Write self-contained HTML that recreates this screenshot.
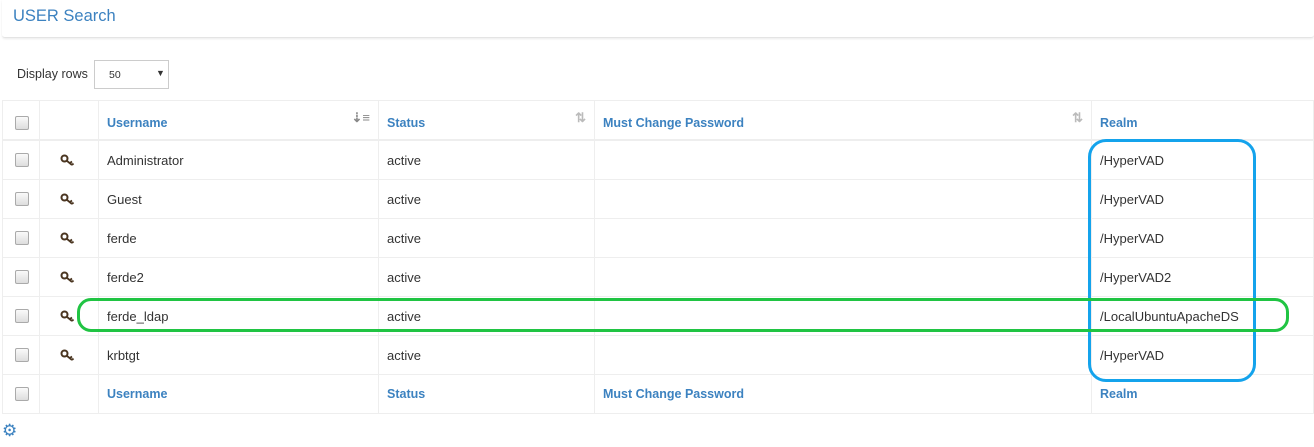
<!DOCTYPE html>
<html><head><style>
body{margin:0;width:1314px;height:447px;background:#fff;font-family:"Liberation Sans",sans-serif;font-size:13px;color:#333;position:relative;overflow:hidden}
.hdr{position:absolute;left:2px;top:0;width:1312px;height:37px;border-bottom:1px solid #e4e4e4;box-shadow:0 1px 2px rgba(0,0,0,.08);border-radius:0 0 3px 3px}
.hdr span{position:absolute;left:11px;top:7px;font-size:16.5px;color:#3c82c0}
.dr{position:absolute;left:17px;top:67px;font-size:12.5px}
.sel{position:absolute;left:94px;top:60px;width:73px;height:27px;border:1px solid #ccc;font-size:10.5px}
.sel span{position:absolute;left:14px;top:8px}
.sel i{position:absolute;left:61px;top:7px;font-style:normal;font-size:9px}
table{position:absolute;left:2px;top:100px;border-collapse:collapse;width:1312px}
td{border:1px solid #eee;height:38px;padding:0 0 0 8px;vertical-align:middle}
tr.h td{font-weight:bold;color:#3c82c0;height:38px;font-size:12.5px}
tr.h1 td{border-bottom:2px solid #eee;padding-top:5px;height:33px}
.cb{width:12px;height:12px;border:1px solid #aaa;border-radius:2px;background:linear-gradient(#fafafa,#ddd);margin-left:4px}
.srt{float:right;margin-right:8px;color:#bbb;font-size:13px;font-weight:bold;margin-top:-6px}
.key{margin-left:12px;display:block;width:16px;height:12px}
.box{position:absolute;border-style:solid}
.gear{position:absolute;left:2px;top:421px;color:#3c82c0;font-size:17px}
</style></head><body>
<div class="hdr"><span>USER Search</span></div>
<div class="dr">Display rows</div>
<div class="sel"><span>50</span><i>▼</i></div>
<table>
<tr class="h h1"><td style="width:28px"><div class="cb"></div></td><td style="width:50px"></td><td style="width:271px">Username<span class="srt" style="color:#888">⇣≡</span></td><td style="width:207px">Status<span class="srt">⇅</span></td><td style="width:488px">Must Change Password<span class="srt">⇅</span></td><td>Realm</td></tr>
<tr><td><div class="cb"></div></td><td><svg class="key" viewBox="0 0 16 12"><circle cx="4.5" cy="4.5" r="3" fill="none" stroke="#4a3520" stroke-width="2"/><path d="M6.5 6.5L12 11M10 9l2-1.5M12 11l1.5-1.5" stroke="#4a3520" stroke-width="1.8" fill="none"/></svg></td><td>Administrator</td><td>active</td><td></td><td>/HyperVAD</td></tr>
<tr><td><div class="cb"></div></td><td><svg class="key" viewBox="0 0 16 12"><circle cx="4.5" cy="4.5" r="3" fill="none" stroke="#4a3520" stroke-width="2"/><path d="M6.5 6.5L12 11M10 9l2-1.5M12 11l1.5-1.5" stroke="#4a3520" stroke-width="1.8" fill="none"/></svg></td><td>Guest</td><td>active</td><td></td><td>/HyperVAD</td></tr>
<tr><td><div class="cb"></div></td><td><svg class="key" viewBox="0 0 16 12"><circle cx="4.5" cy="4.5" r="3" fill="none" stroke="#4a3520" stroke-width="2"/><path d="M6.5 6.5L12 11M10 9l2-1.5M12 11l1.5-1.5" stroke="#4a3520" stroke-width="1.8" fill="none"/></svg></td><td>ferde</td><td>active</td><td></td><td>/HyperVAD</td></tr>
<tr><td><div class="cb"></div></td><td><svg class="key" viewBox="0 0 16 12"><circle cx="4.5" cy="4.5" r="3" fill="none" stroke="#4a3520" stroke-width="2"/><path d="M6.5 6.5L12 11M10 9l2-1.5M12 11l1.5-1.5" stroke="#4a3520" stroke-width="1.8" fill="none"/></svg></td><td>ferde2</td><td>active</td><td></td><td>/HyperVAD2</td></tr>
<tr><td><div class="cb"></div></td><td><svg class="key" viewBox="0 0 16 12"><circle cx="4.5" cy="4.5" r="3" fill="none" stroke="#4a3520" stroke-width="2"/><path d="M6.5 6.5L12 11M10 9l2-1.5M12 11l1.5-1.5" stroke="#4a3520" stroke-width="1.8" fill="none"/></svg></td><td>ferde_ldap</td><td>active</td><td></td><td>/LocalUbuntuApacheDS</td></tr>
<tr><td><div class="cb"></div></td><td><svg class="key" viewBox="0 0 16 12"><circle cx="4.5" cy="4.5" r="3" fill="none" stroke="#4a3520" stroke-width="2"/><path d="M6.5 6.5L12 11M10 9l2-1.5M12 11l1.5-1.5" stroke="#4a3520" stroke-width="1.8" fill="none"/></svg></td><td>krbtgt</td><td>active</td><td></td><td>/HyperVAD</td></tr>
<tr class="h"><td><div class="cb"></div></td><td></td><td>Username</td><td>Status</td><td>Must Change Password</td><td>Realm</td></tr>
</table>
<div class="box" style="left:1088px;top:139px;width:162px;height:237px;border-width:3px;border-color:#14a3ec;border-radius:18px"></div>
<div class="box" style="left:77px;top:298px;width:1206px;height:28px;border-width:3px;border-color:#20c443;border-radius:14px"></div>
<div class="gear">⚙</div>
</body></html>
